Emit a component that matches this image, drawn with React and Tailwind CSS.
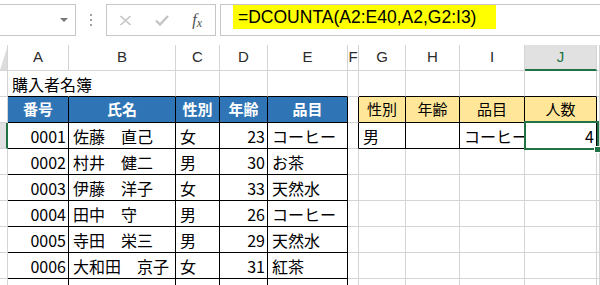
import React from 'react';

const cols = ['', 'A', 'B', 'C', 'D', 'E', 'F', 'G', 'H', 'I', 'J', ''];

const people = [
    ['0001', '佐藤　直己', '女', '23', 'コーヒー'],
    ['0002', '村井　健二', '男', '30', 'お茶'],
    ['0003', '伊藤　洋子', '女', '33', '天然水'],
    ['0004', '田中　守', '男', '26', 'コーヒー'],
    ['0005', '寺田　栄三', '男', '29', '天然水'],
    ['0006', '大和田　京子', '女', '31', '紅茶'],
    ['0007', '野口　一郎', '男', '27', '紅茶'],
];

// sheet content, row index 1-based like Excel
function cellAt(c, r) {
    if (r === 1 && c === 1) return {text: '購入者名簿', spill: true};
    if (r === 2 && c >= 1 && c <= 5) {
        return {text: ['番号', '氏名', '性別', '年齢', '品目'][c - 1], kind: 'blue'};
    }
    if (r >= 3 && c >= 1 && c <= 5) {
        const p = people[r - 3];
        if (!p) return null;
        const right = c === 1 || c === 4;
        return {text: p[c - 1], align: right ? 'right' : 'left'};
    }
    if (r === 2 && c >= 7 && c <= 10) {
        return {text: ['性別', '年齢', '品目', '人数'][c - 7], kind: 'yellow'};
    }
    if (r === 3 && c === 7) return {text: '男'};
    if (r === 3 && c === 9) return {text: 'コーヒー'};
    if (r === 3 && c === 10) return {text: '4', align: 'right'};
    return null;
}

function inTable(c, r) {
    if (c >= 1 && c <= 5 && r >= 2) return true;
    if (c >= 7 && c <= 10 && r >= 2 && r <= 3) return true;
    return false;
}

function Cell({c, r}) {
    const data = cellAt(c, r);
    const blackR = inTable(c, r) || inTable(c + 1, r);
    const blackB = inTable(c, r) || inTable(c, r + 1);
    const hideR = data && data.spill;

    let bg = 'bg-white';
    if (data && data.kind === 'blue') bg = 'bg-[#2F75B5]';
    if (data && data.kind === 'yellow') bg = 'bg-[#FFE699]';

    const classes = [
        'h-[26px] border-r border-b flex items-center whitespace-nowrap',
        bg,
        hideR ? 'border-r-transparent overflow-visible' : blackR ? 'border-r-black overflow-hidden' : 'border-r-[#D4D4D4] overflow-hidden',
        blackB ? 'border-b-black' : 'border-b-[#D4D4D4]',
    ];

    if (!data) return <div className={classes.join(' ')} />;

    if (data.kind === 'blue') {
        classes.push('justify-center text-white font-bold text-[15px]');
    } else if (data.kind === 'yellow') {
        classes.push('justify-center text-[15px] text-black');
    } else if (data.align === 'right') {
        classes.push('justify-end pr-[2px] text-[16px] text-black');
    } else {
        classes.push('justify-start pl-[4px] text-[16px] text-black');
    }

    return (
        <div className={classes.join(' ')}>
            <span className={data.spill ? 'relative z-10' : ''}>{data.text}</span>
        </div>
    );
}

function FormulaBar() {
    return (
        <div className="h-[45px] flex items-start pt-[4px] bg-white">
            <div className="w-[76px] h-[32px] border-y border-r border-[#C6C6C6] flex items-center justify-end pr-[7px]">
                <div className="w-0 h-0 border-l-[4px] border-r-[4px] border-t-[4px] border-l-transparent border-r-transparent border-t-[#777]" />
            </div>
            <div className="w-[30px] h-[32px] flex flex-col items-center justify-center gap-[3px]">
                <div className="w-[2px] h-[2px] bg-[#A0A0A0]" />
                <div className="w-[2px] h-[2px] bg-[#A0A0A0]" />
                <div className="w-[2px] h-[2px] bg-[#A0A0A0]" />
            </div>
            <div className="w-[110px] h-[32px] border border-[#C6C6C6] flex items-center">
                <div className="w-[36px] flex justify-center ml-[1px]">
                    <svg width="13" height="11" viewBox="0 0 13 11">
                        <path d="M1.5 1 L11.5 10 M11.5 1 L1.5 10" stroke="#C4C4C4" strokeWidth="1.6" fill="none" />
                    </svg>
                </div>
                <div className="w-[36px] flex justify-center">
                    <svg width="14" height="11" viewBox="0 0 14 11">
                        <path d="M1 5.5 L5 9.5 L13 1" stroke="#C4C4C4" strokeWidth="2.4" fill="none" />
                    </svg>
                </div>
                <div className="w-[36px] flex justify-center items-end text-[#505050] italic text-[16px] leading-none" style={{fontFamily: '"Liberation Serif", serif'}}>
                    f<span className="text-[12px] relative top-[1px]">x</span>
                </div>
            </div>
            <div className="flex-1 ml-[4px] h-[32px] border-y border-l border-[#C6C6C6] pl-[12px]">
                <div className="w-[263px] h-[24px] bg-[#FFFF00] pl-[5px] flex items-center text-[17.5px] text-black" style={{fontFamily: '"Liberation Sans", Arial, sans-serif'}}>
                    =DCOUNTA(A2:E40,A2,G2:I3)
                </div>
            </div>
        </div>
    );
}

export default function App() {
    const rowNums = [1, 2, 3, 4, 5, 6, 7, 8, 9];

    return (
        <div className="w-[600px] h-[285px] overflow-hidden bg-white relative" style={{fontFamily: '"Noto Sans CJK JP", "Noto Sans", sans-serif'}}>
            <FormulaBar />
            <div className="grid grid-cols-[8px_61px_107px_44px_48px_80px_11px_47px_54px_65px_72px_3px]">
                {cols.map((name, c) => {
                    if (c === 0) {
                        return (
                            <div key={c} className="h-[26px] border-r border-b border-[#D4D4D4] relative overflow-hidden">
                                <div className="absolute right-0 bottom-0 w-0 h-0 border-b-[22px] border-l-[7px] border-b-[#DCDCDC] border-l-transparent" />
                            </div>
                        );
                    }
                    if (name === 'J') {
                        return (
                            <div key={c} className="h-[26px] border-r border-[#D4D4D4] border-b-2 border-b-[#217346] bg-[#E1E1E1] flex items-center justify-center text-[15px] text-[#217346] pt-[1px]" style={{fontFamily: '"Liberation Sans", Arial, sans-serif'}}>
                                {name}
                            </div>
                        );
                    }
                    return (
                        <div key={c} className="h-[26px] border-r border-b border-[#D4D4D4] flex items-center justify-center text-[15px] text-[#2B2B2B] overflow-hidden" style={{fontFamily: '"Liberation Sans", Arial, sans-serif'}}>
                            {name}
                        </div>
                    );
                })}
                {rowNums.map((r) =>
                    cols.map((_, c) => {
                        if (c === 0) {
                            return (
                                <div
                                    key={r + '-' + c}
                                    className={r === 3
                                        ? 'h-[26px] border-b border-b-[#D4D4D4] border-r-2 border-r-[#217346] bg-[#E1E1E1]'
                                        : 'h-[26px] border-b border-r border-[#D4D4D4] bg-white'}
                                />
                            );
                        }
                        return <Cell key={r + '-' + c} c={c} r={r} />;
                    })
                )}
            </div>
            <div className="absolute left-[524px] top-[121px] w-[75px] h-[29px] border-2 border-[#217346]" />
            <div className="absolute left-[594px] top-[146px] w-[7px] h-[7px] bg-[#217346] border border-white" />
        </div>
    );
}
